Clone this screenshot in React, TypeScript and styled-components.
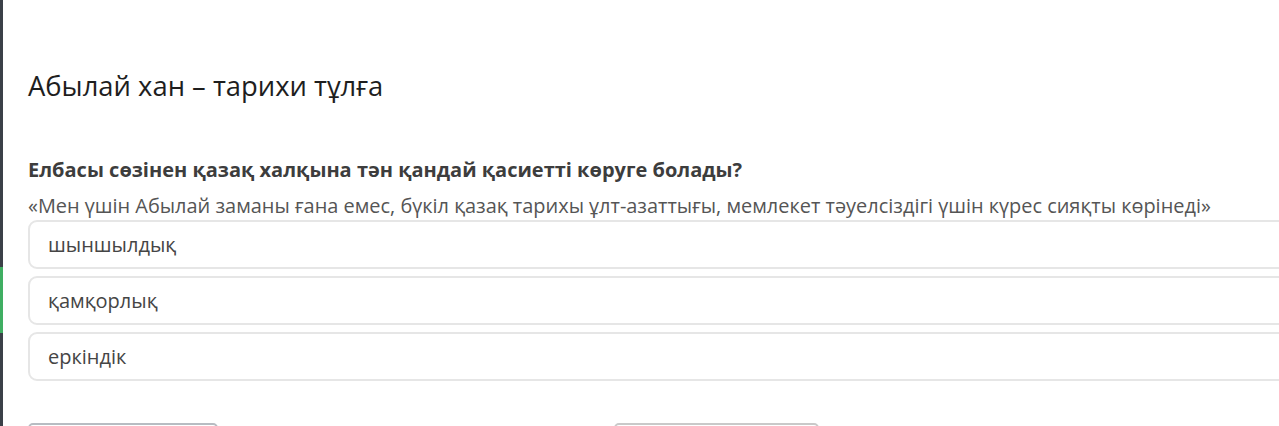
import React, { FC } from 'react';
import styled, { createGlobalStyle } from 'styled-components';

const GlobalStyle = createGlobalStyle`
  html, body {
    margin: 0;
    padding: 0;
    background: #fff;
    overflow: hidden;
  }
  body {
    font-family: "Open Sans", "Noto Sans", sans-serif;
  }
`

const PageStyle = styled.div`
  display: flex;
  height: 426px;
  overflow: hidden;
`

const SideStripStyle = styled.div`
  width: 3px;
  flex-shrink: 0;
  background-color: #3b4048;
  display: flex;
  flex-direction: column;
  padding-top: 267px;

  & > div {
    height: 66px;
    background-color: #3fae62;
  }
`

const ContentStyle = styled.div`
  flex: 1;
  padding: 66px 0 0 25px;
  min-width: 0;
`

const TitleStyle = styled.h1`
  margin: 0 0 51px;
  font-size: 27.4px;
  font-weight: 400;
  line-height: 40px;
  color: #1e1e1e;
`

const QuestionStyle = styled.div`
  font-size: 20px;
  font-weight: 700;
  line-height: 26px;
  color: #3d3d3d;
`

const QuoteStyle = styled.div`
  margin-top: 10px;
  font-size: 19.95px;
  line-height: 26px;
  color: #555;
  white-space: nowrap;
`

const OptionsStyle = styled.div`
  display: flex;
  flex-direction: column;
  gap: 7px;
  margin-top: 1px;
  width: calc(100% + 40px);
`

const OptionStyle = styled.div`
  height: 45px;
  border: 2px solid #e6e6e6;
  border-radius: 9px;
  display: flex;
  align-items: center;
  padding-left: 18px;
  font-size: 20px;
  color: #454545;
`

const ButtonsRowStyle = styled.div`
  display: flex;
  margin-top: 42px;
`

const ButtonStyle = styled.button<{ $width: number; $shift: number; $edge: string }>`
  width: ${p => p.$width}px;
  height: 42px;
  margin-left: ${p => p.$shift}px;
  border: 2px solid ${p => p.$edge};
  border-radius: 5px;
  background: #fff;
  flex-shrink: 0;
`

const options = ["шыншылдық", "қамқорлық", "еркіндік"]

const App: FC = () => {
  return <>
    <GlobalStyle />
    <PageStyle>
      <SideStripStyle>
        <div />
      </SideStripStyle>
      <ContentStyle>
        <TitleStyle>Абылай хан – тарихи тұлға</TitleStyle>
        <QuestionStyle>Елбасы сөзінен қазақ халқына тән қандай қасиетті көруге болады?</QuestionStyle>
        <QuoteStyle>«Мен үшін Абылай заманы ғана емес, бүкіл қазақ тарихы ұлт-азаттығы, мемлекет тәуелсіздігі үшін күрес сияқты көрінеді»</QuoteStyle>
        <OptionsStyle>
          {options.map(o => <OptionStyle key={o}>{o}</OptionStyle>)}
        </OptionsStyle>
        <ButtonsRowStyle>
          <ButtonStyle $width={190} $shift={0} $edge="#b7bcc2" />
          <ButtonStyle $width={205} $shift={396} $edge="#c9c9c9" />
        </ButtonsRowStyle>
      </ContentStyle>
    </PageStyle>
  </>
}

export default App
